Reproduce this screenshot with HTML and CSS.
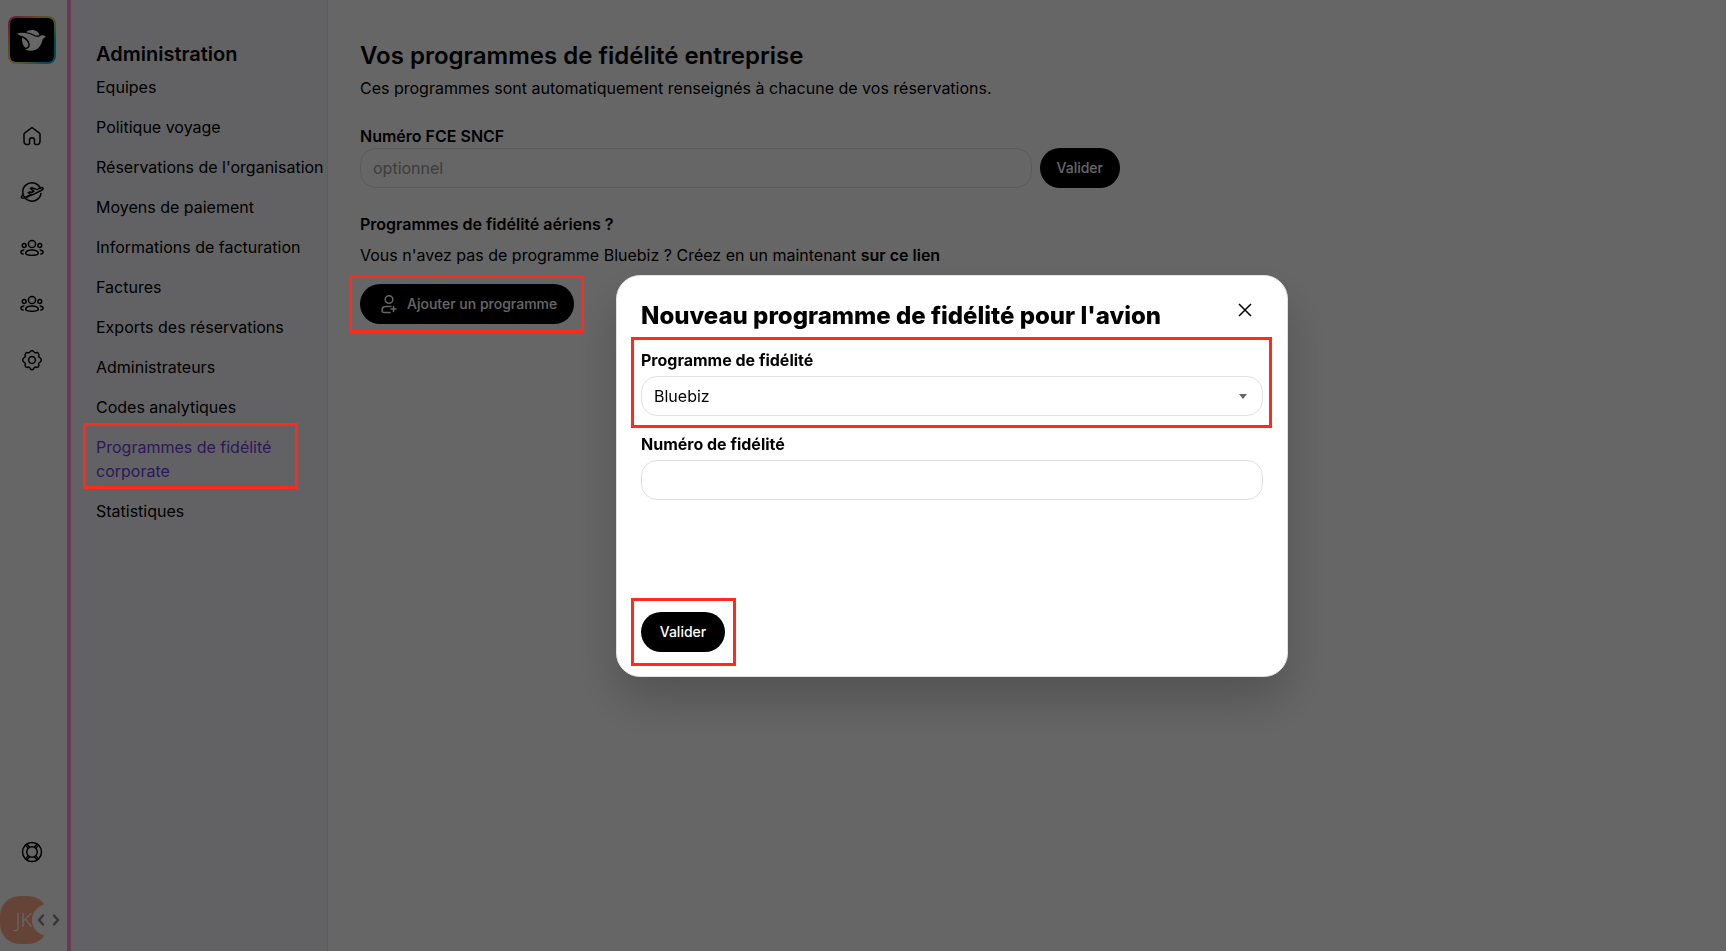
FILE: index.html
```html
<!DOCTYPE html>
<html lang="fr">

<head>
    <meta charset="UTF-8">
    <meta name="viewport" content="width=device-width, initial-scale=1.0">
    <title>Programmes de fidélité corporate</title>
    <link rel="stylesheet" href="styles.css">
</head>

<body>
    <!-- shared icons -->
    <svg class="sprite" aria-hidden="true">
        <symbol id="icon-people" viewBox="0 0 24 24">
            <circle cx="12" cy="8" r="3.600"/>
            <path d="M12 14c-4 0-6.300 1.300-6.300 3.300 0 1.300 1.500 2 6.300 2s6.300-.7 6.300-2C18.300 15.300 16 14 12 14z"/>
            <circle cx="4.200" cy="9.500" r="1.900"/>
            <circle cx="19.800" cy="9.500" r="1.900"/>
            <path d="M3.800 14c-1.700.3-2.900 1.200-2.900 2.500 0 .8.800 1.300 2.300 1.500M20.200 14c1.700.3 2.900 1.200 2.900 2.500 0 .8-.8 1.300-2.300 1.500"/>
        </symbol>
    </svg>

    <div class="app">
        <aside class="rail">
            <a class="logo" href="#" aria-label="Accueil">
                <svg viewBox="0 0 44 44">
                    <path d="M7.300 15.300c5.500-1.200 11-.3 15.500 2 2.800 1.500 5 2.200 7 1 1.500-1.500 3.500-1.500 6 .4l-3 2.300c-.8 3.500-2 6.500-4.500 9-3.500 3.400-8.500 3.300-13.500 1.500 3.200-.4 5-2 5-4.500 0-4-3.300-7.300-7.500-9-2 0-3.800-.9-5-2.700z"/>
                    <path d="M16 14.200c2.500-2.700 8.500-3 11.200-.6 1.500 1.300 2.200 2.500 2.200 3.600-1.800.8-4 .3-6.300-1-2.200-1.100-4.400-1.800-7.100-2z"/>
                    <path d="M12 19.500c3.500 1.600 6.300 4.400 6.300 7.500 0 1.600-1.200 2.600-3 2.700-2.500-2.200-3.600-5.700-3.300-10.200z"/>
                </svg>
            </a>
            <nav class="rail-nav">
                <a href="#" aria-label="Tableau de bord">
                    <svg class="icon" viewBox="0 0 24 24"><path d="M12 3.500l-7.200 5.300a2 2 0 0 0-.8 1.600v6.800c0 1.900 1.300 3.300 3.200 3.300h1.300c.6 0 1-.4 1-1v-3.200a2.500 2.500 0 0 1 5 0v3.200c0 .6.400 1 1 1h1.300c1.900 0 3.200-1.400 3.200-3.300v-6.800a2 2 0 0 0-.8-1.600z"/></svg>
                </a>
                <a href="#" aria-label="Voyages">
                    <svg class="icon" viewBox="0 0 24 24">
                        <path d="M20.400 8.300A9.200 9.200 0 1 0 21 13.500M3.200 14.500c-1.500 1.500-2.300 2.800-1.800 3.300.9.900 4.600-.3 9.600-2.800"/>
                        <path d="M8.200 12.700l2.500 1.800c.7.500 1.500.5 2.300.1l9-4.600c1-.5 1.200-1.200.9-1.800-.4-.7-1.400-.8-2.600-.2l-3.300 1.600-5.200-1.800-1.400.7 3.500 2.900-2.300 1.100-1.700-.6z"/>
                        <path d="M6 18l2-2"/>
                    </svg>
                </a>
                <a href="#" aria-label="Voyageurs"><svg class="icon"><use href="#icon-people"/></svg></a>
                <a href="#" aria-label="Groupes"><svg class="icon"><use href="#icon-people"/></svg></a>
                <a href="#" aria-label="Administration">
                    <svg class="icon" viewBox="0 0 24 24">
                        <circle cx="12" cy="12" r="3.400"/>
                        <path d="M10.100 3.300c.6-1.500 3.200-1.500 3.800 0 .4.900 1.400 1.300 2.300.9 1.500-.6 3.200 1.100 2.600 2.600-.4.900 0 1.900.9 2.300 2 .6 2 4.200 0 4.800-.9.400-1.300 1.400-.9 2.300.6 1.500-1.100 3.200-2.600 2.600-.9-.4-1.900 0-2.300.9-.6 2-3.200 2-3.800 0-.4-.9-1.400-1.300-2.300-.9-1.500.6-3.200-1.100-2.600-2.600.4-.9 0-1.900-.9-2.300-2-.6-2-4.200 0-4.800.9-.4 1.300-1.400.9-2.300-.6-1.500 1.100-3.200 2.600-2.600.9.400 1.900 0 2.300-.9z" transform="translate(0 .5)"/>
                    </svg>
                </a>
            </nav>
            <a class="help" href="#" aria-label="Aide">
                <svg class="icon" viewBox="0 0 24 24">
                    <circle cx="12" cy="12" r="9.500"/>
                    <circle cx="12" cy="12" r="5.300"/>
                    <path d="M5.300 5.300l3 3M6.800 4l2.700 3M18.700 5.300l-3 3M17.200 4l-2.700 3M5.300 18.700l3-3M6.800 20l2.700-3M18.700 18.700l-3-3M17.200 20l-2.700-3"/>
                </svg>
            </a>
            <div class="account">
                <span class="avatar">JK</span>
                <button class="toggle" type="button" aria-label="Déplier le menu">
                    <svg viewBox="0 0 32 32"><path d="M11 11.500L7 16l4 4.500M22 11.500l4 4.500-4 4.500"/></svg>
                </button>
            </div>
        </aside>

        <aside class="sidebar">
            <h2>Administration</h2>
            <nav class="menu">
                <a href="#">Equipes</a>
                <a href="#">Politique voyage</a>
                <a href="#">Réservations de l'organisation</a>
                <a href="#">Moyens de paiement</a>
                <a href="#">Informations de facturation</a>
                <a href="#">Factures</a>
                <a href="#">Exports des réservations</a>
                <a href="#">Administrateurs</a>
                <a href="#">Codes analytiques</a>
                <a class="active marked mark-menu" href="#">Programmes de fidélité corporate</a>
                <a href="#">Statistiques</a>
            </nav>
        </aside>

        <main class="content">
            <h1>Vos programmes de fidélité entreprise</h1>
            <p>Ces programmes sont automatiquement renseignés à chacune de vos réservations.</p>

            <form class="fce">
                <label for="fce">Numéro FCE SNCF</label>
                <div class="fce-row">
                    <input class="control" id="fce" type="text" placeholder="optionnel">
                    <button class="btn" type="submit">Valider</button>
                </div>
            </form>

            <h3>Programmes de fidélité aériens ?</h3>
            <p class="hint">Vous n'avez pas de programme Bluebiz ? Créez en un maintenant <a href="#">sur ce lien</a></p>
            <div class="marked mark-add">
                <button class="btn btn-add" type="button">
                    <svg class="icon" viewBox="0 0 24 24">
                        <circle cx="12" cy="7.500" r="3.800"/>
                        <path d="M14 14.500H9c-2.500 0-4 1.500-4 3.700 0 1.500.9 2.300 2.300 2.300H13M16.500 14.500v5M14 17h5"/>
                    </svg>
                    Ajouter un programme
                </button>
            </div>
        </main>
    </div>

    <div class="overlay">
        <div class="modal" role="dialog" aria-modal="true" aria-labelledby="modal-title">
            <div class="modal-head">
                <h2 id="modal-title">Nouveau programme de fidélité pour l'avion</h2>
                <button class="close" type="button" aria-label="Fermer">
                    <svg viewBox="0 0 20 20"><path d="M4 4l12 12M16 4L4 16"/></svg>
                </button>
            </div>
            <form class="modal-form">
                <div class="field marked mark-field">
                    <label for="programme">Programme de fidélité</label>
                    <div class="select">
                        <select class="control" id="programme">
                            <option>Bluebiz</option>
                        </select>
                    </div>
                </div>
                <div class="field">
                    <label for="numero">Numéro de fidélité</label>
                    <input class="control" id="numero" type="text">
                </div>
                <div class="actions marked mark-submit">
                    <button class="btn btn-submit" type="submit">Valider</button>
                </div>
            </form>
        </div>
    </div>
</body>

</html>
```

FILE: styles.css
```css
* {
    padding: 0;
    margin: 0;
    box-sizing: border-box;
}

body {
    font-family: Inter, "Liberation Sans", sans-serif;
    font-size: 16px;
    line-height: 24px;
    color: #000;
    background-color: #fff;
}

a {
    color: inherit;
    text-decoration: none;
}

button,
input,
select {
    font: inherit;
    color: inherit;
}

.sprite {
    display: none;
}

.icon {
    display: block;
    width: 24px;
    height: 24px;
    fill: none;
    stroke: currentColor;
    stroke-width: 1.5;
    stroke-linecap: round;
    stroke-linejoin: round;
}

.app {
    display: flex;
    min-height: 100vh;
}

/* icon rail */
.rail {
    width: 71px;
    flex-shrink: 0;
    display: flex;
    flex-direction: column;
    padding: 16px 0 7px;
    border-right: 4px solid #ff8fd2;
}

.logo {
    width: 48px;
    height: 48px;
    margin-left: 8px;
    padding: 2px;
    border-radius: 8px;
    background: conic-gradient(#ffa04d, #d8e04d 45deg, #00c8b4 90deg, #00b4ff 140deg, #e6e64d 215deg, #ff9a3c 270deg, #ff3cc8 315deg, #ffa04d);
}

.logo svg {
    display: block;
    border-radius: 6px;
    background-color: #000;
    fill: #fff;
}

.rail-nav {
    display: flex;
    flex-direction: column;
    gap: 32px;
    margin: 60px 0 0 20px;
}

.help {
    margin: auto 0 32px 20px;
}

.account {
    position: relative;
    display: flex;
}

.avatar {
    width: 48px;
    height: 48px;
    border-radius: 20px;
    background-color: #ffa98a;
    color: #fff;
    font-family: "Noto Sans", sans-serif;
    font-size: 20px;
    font-weight: 300;
    line-height: 48px;
    text-align: center;
}

.toggle {
    position: absolute;
    left: 32px;
    top: 8px;
    width: 32px;
    height: 32px;
    border: none;
    border-radius: 50%;
    background-color: #fff;
}

.toggle svg {
    display: block;
    fill: none;
    stroke: #888;
    stroke-width: 2.5;
    stroke-linecap: round;
    stroke-linejoin: round;
}

/* admin menu */
.sidebar {
    width: 257px;
    flex-shrink: 0;
    padding: 40px 0 24px 25px;
    background-color: #f5f5fa;
    border-right: 1px solid #e6e6e6;
}

.sidebar h2 {
    font-size: 20px;
    font-weight: 600;
    line-height: 28px;
    margin-bottom: 7px;
}

.menu {
    display: flex;
    flex-direction: column;
    gap: 16px;
}

.menu .active {
    color: #7040e0;
}

/* page */
.content {
    flex: 1;
    padding: 40px 32px;
}

.content h1 {
    font-size: 24px;
    font-weight: 600;
    line-height: 32px;
    margin-bottom: 4px;
}

.fce {
    max-width: 760px;
    margin: 24px 0;
}

.content h3,
label {
    display: block;
    font-size: 16px;
    font-weight: 600;
}

.fce-row {
    display: flex;
    gap: 8px;
}

.control {
    display: block;
    width: 100%;
    height: 40px;
    padding: 0 12px;
    border: 1px solid #e1e1e1;
    border-radius: 16px;
    background-color: #fff;
    outline: none;
}

.control::placeholder {
    color: #999;
}

.hint {
    margin: 7px 0 17px;
}

.hint a {
    font-weight: 600;
}

.btn {
    height: 40px;
    padding: 0 17px;
    border: none;
    border-radius: 20px;
    background-color: #000;
    color: #fff;
    font-size: 14px;
    font-weight: 500;
    cursor: pointer;
}

.btn-add {
    display: flex;
    align-items: center;
    gap: 6px;
}

.btn-submit {
    min-width: 84px;
}

/* modal */
.overlay {
    position: fixed;
    inset: 0;
    z-index: 10;
    display: flex;
    justify-content: center;
    align-items: center;
    padding-left: 178px;
    background-color: rgba(0, 0, 0, 0.6);
}

.modal {
    width: 672px;
    padding: 24px;
    border: 1px solid #e1e1e1;
    border-radius: 24px;
    background-color: #fff;
    box-shadow: 0 24px 48px rgba(0, 0, 0, 0.2);
}

.modal-head {
    display: flex;
    justify-content: space-between;
    align-items: flex-start;
    margin-bottom: 16px;
}

.modal-head h2 {
    font-size: 24px;
    font-weight: 800;
    line-height: 32px;
}

.modal-form {
    display: flex;
    flex-direction: column;
    gap: 16px;
}

.close {
    width: 20px;
    height: 20px;
    margin-right: 8px;
    border: none;
    background-color: transparent;
    cursor: pointer;
}

.close svg {
    display: block;
    stroke: #000;
    stroke-width: 1.5;
}

.field label {
    font-weight: 700;
    margin-bottom: 4px;
}

.select {
    position: relative;
}

.select select {
    appearance: none;
}

.select::after {
    content: "";
    position: absolute;
    right: 16px;
    top: 18px;
    border: 4px solid transparent;
    border-top: 5px solid #666;
    border-bottom: none;
    pointer-events: none;
}

.actions {
    width: fit-content;
    margin-top: 96px;
}

/* red frames, drawn over the overlay */
.marked {
    position: relative;
}

.marked::after {
    content: "";
    position: absolute;
    z-index: 20;
    border: 3px solid #ff2a1e;
    pointer-events: none;
}

.mark-menu::after {
    inset: -12px 29px -6px -13px;
}

.mark-add {
    width: fit-content;
}

.mark-add::after {
    inset: -9px -10px -9px -11px;
}

.mark-field::after {
    inset: -11px -9px -12px -10px;
}

.mark-submit::after {
    inset: -14px -11px -14px -10px;
}
```
